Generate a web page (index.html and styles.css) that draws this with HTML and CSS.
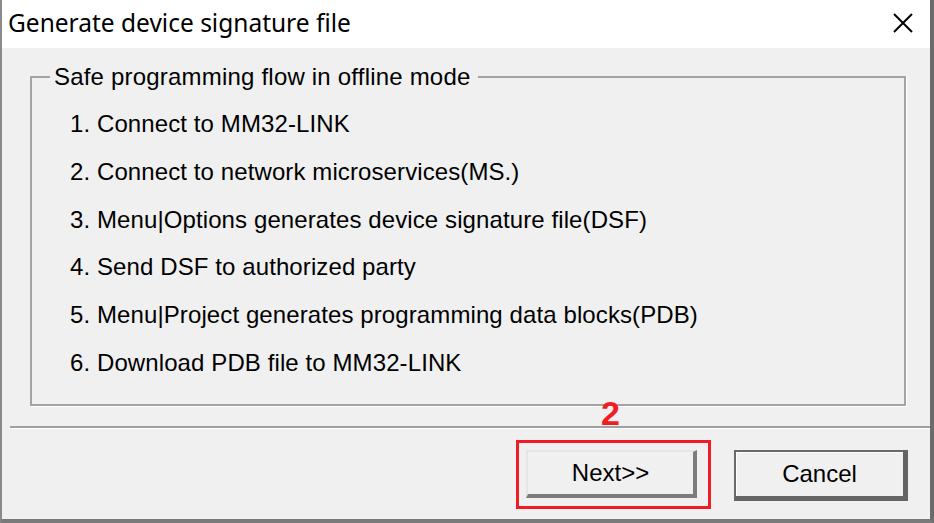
FILE: index.html
```html
<!DOCTYPE html>
<html lang="en">
  <head>
    <meta charset="UTF-8" />
    <meta name="viewport" content="width=device-width, initial-scale=1.0" />
    <title>Generate device signature file</title>
    <link rel="stylesheet" href="styles.css">
  </head>
  <body>
    <div class="window">
      <div class="titlebar">
        <span class="title">Generate device signature file</span>
        <svg class="close" width="22" height="22" viewBox="0 0 22 22">
          <path d="M2 2 L20 20 M20 2 L2 20" stroke="#000" stroke-width="2" fill="none" />
        </svg>
      </div>

      <div class="content">
        <fieldset class="group">
          <legend>Safe programming flow in offline mode</legend>
          <ul class="steps">
            <li>1. Connect to MM32-LINK</li>
            <li>2. Connect to network microservices(MS.)</li>
            <li>3. Menu|Options generates device signature file(DSF)</li>
            <li>4. Send DSF to authorized party</li>
            <li>5. Menu|Project generates programming data blocks(PDB)</li>
            <li>6. Download PDB file to MM32-LINK</li>
          </ul>
        </fieldset>

        <div class="separator"></div>

        <div class="footer">
          <div class="highlight">
            <span class="marker">2</span>
            <button class="btn">Next&gt;&gt;</button>
          </div>
          <button class="btn btn-cancel">Cancel</button>
        </div>
      </div>
    </div>
  </body>
</html>
```

FILE: styles.css
```css
* {
  margin: 0;
  padding: 0;
  box-sizing: border-box;
}

body {
  width: 934px;
  height: 523px;
  overflow: hidden;
  background-color: #f0f0f0;
  font-family: "Liberation Sans", Arial, sans-serif;
  color: #000;
}

.window {
  width: 934px;
  height: 523px;
  display: flex;
  flex-direction: column;
  border-left: 2px solid #8a8a8a;
  border-right: 4px solid #6b6b6b;
  border-bottom: 4px solid #7a7a7a;
  background-color: #f0f0f0;
}

.titlebar {
  height: 48px;
  flex-shrink: 0;
  background-color: #fff;
  display: flex;
  align-items: center;
  justify-content: space-between;
  padding: 0 16px 0 6px;
}

.title {
  font-family: "Noto Sans", "Open Sans", sans-serif;
  font-size: 24.5px;
  margin-top: -4px;
}

.close {
  margin-top: -3px;
}

.content {
  flex: 1;
  display: flex;
  flex-direction: column;
}

.group {
  margin: 14px 24px 0 28px;
  height: 344px;
  border: 2px solid #a4a4a4;
  box-shadow: 1px 1px 0 #fff;
  padding: 0 0 0 38px;
}

.group legend {
  font-size: 24px;
  padding: 0 7px 0 4px;
  margin-left: -20px;
  line-height: 30px;
  letter-spacing: 0.2px;
}

.steps {
  list-style: none;
  margin-top: 18px;
}

.steps li {
  font-size: 24px;
  line-height: 28px;
  height: 47.8px;
  letter-spacing: 0.1px;
}

.separator {
  margin: 20px 0 0 8px;
  height: 3px;
  border-top: 2px solid #a0a0a0;
  border-bottom: 1px solid #fff;
}

.footer {
  display: flex;
  justify-content: flex-end;
  align-items: flex-start;
  gap: 23px;
  padding: 11px 22px 0 0;
}

.highlight {
  position: relative;
  border: 3px solid #ee1c24;
  padding: 7px 11px 8px 7px;
}

.marker {
  position: absolute;
  top: -50px;
  left: 82px;
  color: #f21d24;
  font-size: 34px;
  font-weight: bold;
  line-height: 40px;
}

.btn {
  display: block;
  width: 171px;
  height: 48px;
  background-color: #f0f0f0;
  font-family: "Liberation Sans", Arial, sans-serif;
  font-size: 24px;
  color: #000;
  border-style: solid;
  border-width: 2px 4px 4px 2px;
  border-color: #e6e6e6 #7c7c7c #7c7c7c #e6e6e6;
}

.btn-cancel {
  width: 174px;
  height: 51px;
  margin-top: 10px;
  border-width: 2px 5px 5px 2px;
  border-color: #6a6a6a #646464 #646464 #6a6a6a;
  box-shadow: inset 1px 1px 0 #fff;
}
```
